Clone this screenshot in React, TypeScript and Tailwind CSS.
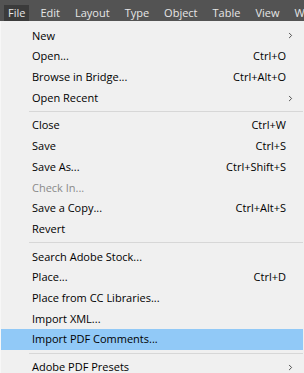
import { ChevronRight } from "lucide-react";

type Item =
  | { kind: "item"; label: string; shortcut?: string; sub?: boolean; disabled?: boolean; active?: boolean }
  | { kind: "sep" };

const menuBar = ["File", "Edit", "Layout", "Type", "Object", "Table", "View", "Window"];

const items: Item[] = [
  { kind: "item", label: "New", sub: true },
  { kind: "item", label: "Open...", shortcut: "Ctrl+O" },
  { kind: "item", label: "Browse in Bridge...", shortcut: "Ctrl+Alt+O" },
  { kind: "item", label: "Open Recent", sub: true },
  { kind: "sep" },
  { kind: "item", label: "Close", shortcut: "Ctrl+W" },
  { kind: "item", label: "Save", shortcut: "Ctrl+S" },
  { kind: "item", label: "Save As...", shortcut: "Ctrl+Shift+S" },
  { kind: "item", label: "Check In...", disabled: true },
  { kind: "item", label: "Save a Copy...", shortcut: "Ctrl+Alt+S" },
  { kind: "item", label: "Revert" },
  { kind: "sep" },
  { kind: "item", label: "Search Adobe Stock..." },
  { kind: "item", label: "Place...", shortcut: "Ctrl+D" },
  { kind: "item", label: "Place from CC Libraries..." },
  { kind: "item", label: "Import XML..." },
  { kind: "item", label: "Import PDF Comments...", active: true },
  { kind: "sep" },
  { kind: "item", label: "Adobe PDF Presets", sub: true },
];

const App = () => {
  return (
    <div
      className="w-[304px] h-[373px] overflow-hidden bg-[#f0f0f0] text-[11px]"
      style={{ fontFamily: '"Open Sans", "Noto Sans", sans-serif' }}
    >
      {/* menu bar */}
      <div className="h-[21px] bg-[#535353] flex items-end pl-[4px] text-[#e6e6e6] overflow-hidden whitespace-nowrap">
        {menuBar.map((m, i) => (
          <div
            key={m}
            className={`h-[16px] shrink-0 flex items-center px-[4px] mr-[7px] ${i === 0 ? "bg-[#3b3b3b]" : ""}`}
          >
            {m}
          </div>
        ))}
      </div>

      {/* dropdown */}
      <div className="pt-[4.6px] border-l border-[#f7f7f7] mr-[1px]">
        {items.map((it, i) =>
          it.kind === "sep" ? (
            <div key={i} className="h-[7px] flex items-center pl-[28px]">
              <div className="h-px w-full bg-[#d7d7d7]" />
            </div>
          ) : (
            <div
              key={i}
              className={`h-[20.7px] flex items-center pl-[31px] pr-[17px] ${
                it.active ? "bg-[#91c9f7]" : ""
              } ${it.disabled ? "text-[#8a8a8a]" : "text-[#000]"}`}
            >
              <span className="flex-1 whitespace-nowrap">{it.label}</span>
              {it.shortcut && <span className="whitespace-nowrap">{it.shortcut}</span>}
              {it.sub && (
                <ChevronRight size={9} strokeWidth={2.5} className="text-[#444] -mr-[9px]" />
              )}
            </div>
          )
        )}
      </div>
    </div>
  );
};

export default App;
